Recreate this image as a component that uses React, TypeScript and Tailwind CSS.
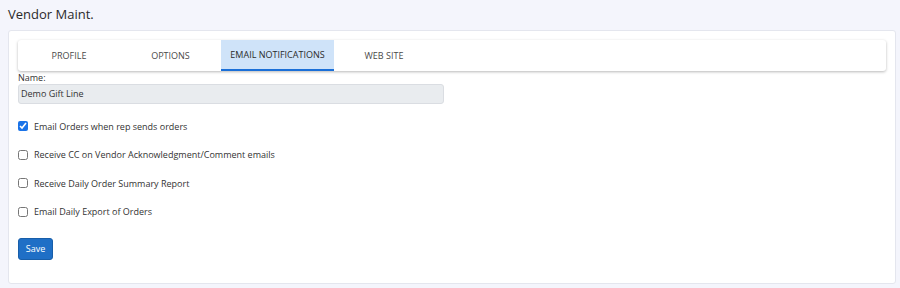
import React from "react";

const tabs = [
  { label: "PROFILE", w: "w-[102px]", active: false },
  { label: "OPTIONS", w: "w-[101px]", active: false },
  { label: "EMAIL NOTIFICATIONS", w: "w-[113px]", active: true },
  { label: "WEB SITE", w: "w-[100px]", active: false },
];

const options = [
  { label: "Email Orders when rep sends orders", checked: true },
  { label: "Receive CC on Vendor Acknowledgment/Comment emails", checked: false },
  { label: "Receive Daily Order Summary Report", checked: false },
  { label: "Email Daily Export of Orders", checked: false },
];

export default function App() {
  return (
    <div
      className="w-[900px] h-[288px] bg-[#f4f5fc] text-[#212529] overflow-hidden"
      style={{ fontFamily: '"Open Sans", "Noto Sans", sans-serif' }}
    >
      <div className="h-[30px] flex items-center pl-2 text-[13px] text-[#2a2a2a]">Vendor Maint.</div>
      <div className="ml-2 mr-1 h-[254px] bg-white border border-[#e4e6ee] rounded-[3px] pt-[9px] px-[9px]">
        <div className="h-[31px] flex bg-white rounded-[3px] shadow-[0_1px_3px_rgba(0,0,0,0.28)]">
          {tabs.map((t) => (
            <div
              key={t.label}
              className={`${t.w} h-full flex items-center justify-center text-[9px] font-medium ${
                t.active
                  ? "bg-[#cfe3f9] text-[#2b2b2b] border-b-2 border-[#1a6fd8]"
                  : "text-[#4a4a4a]"
              }`}
            >
              {t.label}
            </div>
          ))}
        </div>
        <div className="h-[13px] leading-[13px] text-[9px] text-[#333]">Name:</div>
        <div className="w-[426px] h-[20px] bg-[#e9ecef] border border-[#dadde2] rounded-[3px] flex items-center pl-[2px] text-[9px] text-[#333]">
          Demo Gift Line
        </div>
        <div className="mt-[8px] flex flex-col">
          {options.map((o) => (
            <label key={o.label} className="h-[28.5px] flex items-center gap-[6px] text-[9px] text-[#333]">
              <input
                type="checkbox"
                defaultChecked={o.checked}
                className="m-0 w-[10px] h-[10px] accent-[#1a73e8]"
              />
              <span>{o.label}</span>
            </label>
          ))}
        </div>
        <button className="mt-[12px] w-[35px] h-[22px] bg-[#1f6fc6] border border-[#185ea9] rounded-[3px] text-white text-[9px] font-medium flex items-center justify-center">
          Save
        </button>
      </div>
    </div>
  );
}
